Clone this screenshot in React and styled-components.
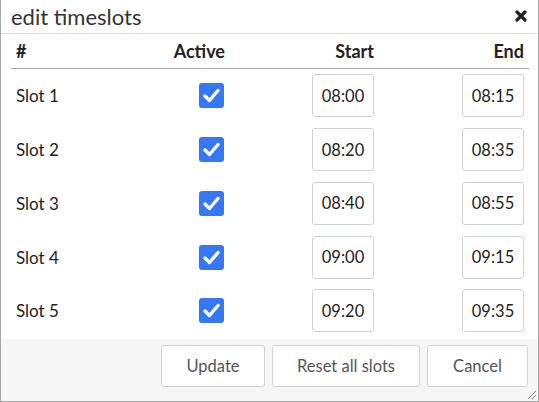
import React from 'react';
import styled, { createGlobalStyle } from 'styled-components';

const GlobalStyle = createGlobalStyle`
  html, body {
    margin: 0;
    padding: 0;
    background: #fff;
  }
  * {
    box-sizing: border-box;
  }
`;

const Dialog = styled.div`
  position: relative;
  width: 539px;
  height: 402px;
  display: flex;
  flex-direction: column;
  border: 1px solid #a8a8a8;
  border-top: none;
  font-family: 'Lato', 'Liberation Sans', sans-serif;
  color: #222;
  background: #fff;
`;

const TitleBar = styled.div`
  height: 34px;
  display: flex;
  align-items: center;
  justify-content: space-between;
  padding: 0 11px 1px 10px;
  border-bottom: 1px solid #dedede;
`;

const Title = styled.h1`
  margin: 0;
  font-size: 22px;
  font-weight: normal;
  color: #333;
`;

const Close = styled.button`
  border: none;
  background: none;
  padding: 0;
  width: 12px;
  height: 12px;
  display: flex;
  cursor: pointer;
`;

const Table = styled.div`
  flex: 1;
  padding: 0 9px 0 10px;
`;

const Row = styled.div`
  display: grid;
  grid-template-columns: 70px 150px 149px 150px;
  align-items: center;
  height: ${({ $head }) => ($head ? '35px' : '53.75px')};
  border-bottom: ${({ $head }) => ($head ? '1px solid #a8a8a8' : 'none')};
  font-weight: ${({ $head }) => ($head ? 'bold' : 'normal')};
  font-size: ${({ $head }) => ($head ? '18px' : '17px')};
`;

const Cell = styled.div`
  display: flex;
  justify-content: ${({ $left }) => ($left ? 'flex-start' : 'flex-end')};
  padding: ${({ $left }) => ($left ? '0 0 0 5px' : '0 6px 0 0')};
`;

const Check = styled.span`
  width: 25px;
  height: 25px;
  margin-right: 1px;
  border-radius: 3px;
  background: #3478f6;
  display: flex;
  align-items: center;
  justify-content: center;
`;

const TimeInput = styled.input`
  width: 62px;
  height: 43px;
  border: 1px solid #cfd3d8;
  border-radius: 3px;
  text-align: center;
  font-family: 'Lato', 'Liberation Sans', sans-serif;
  font-size: 16.5px;
  color: #222;
  padding: 0;
  background: #fff;
`;

const Footer = styled.div`
  height: 62px;
  background: #f6f6f6;
  display: flex;
  justify-content: flex-end;
  align-items: flex-start;
  gap: 7px;
  padding: 6px 10px 0 0;
`;

const Button = styled.button`
  width: ${({ $w }) => $w}px;
  height: 42px;
  background: #fff;
  border: 1px solid #d3d3d3;
  border-radius: 3px;
  font-family: 'Lato', 'Liberation Sans', sans-serif;
  font-size: 16.5px;
  color: #555;
  cursor: pointer;
`;

const Grip = styled.svg`
  position: absolute;
  right: 1px;
  bottom: 1px;
`;

const slots = [
  ['Slot 1', '08:00', '08:15'],
  ['Slot 2', '08:20', '08:35'],
  ['Slot 3', '08:40', '08:55'],
  ['Slot 4', '09:00', '09:15'],
  ['Slot 5', '09:20', '09:35'],
];

const CheckMark = () => (
  <svg width="17" height="15" viewBox="0 0 17 15">
    <path d="M2 8 L6.5 12.5 L15 2.5" fill="none" stroke="#fff" strokeWidth="3.4" strokeLinecap="round" strokeLinejoin="round" />
  </svg>
);

const App = () => (
  <>
    <GlobalStyle />
    <Dialog>
      <TitleBar>
        <Title>edit timeslots</Title>
        <Close aria-label="close">
          <svg width="12" height="12" viewBox="0 0 12 12">
            <path d="M2 2 L10 10 M10 2 L2 10" stroke="#222" strokeWidth="3.2" strokeLinecap="round" />
          </svg>
        </Close>
      </TitleBar>
      <Table>
        <Row $head>
          <Cell $left>#</Cell>
          <Cell>Active</Cell>
          <Cell>Start</Cell>
          <Cell>End</Cell>
        </Row>
        {slots.map(([name, start, end]) => (
          <Row key={name}>
            <Cell $left>{name}</Cell>
            <Cell>
              <Check>
                <CheckMark />
              </Check>
            </Cell>
            <Cell>
              <TimeInput defaultValue={start} />
            </Cell>
            <Cell>
              <TimeInput defaultValue={end} />
            </Cell>
          </Row>
        ))}
      </Table>
      <Footer>
        <Button $w={104}>Update</Button>
        <Button $w={148}>Reset all slots</Button>
        <Button $w={101}>Cancel</Button>
      </Footer>
      <Grip width="12" height="12" viewBox="0 0 12 12">
        <path d="M11 3 L3 11 M11 7 L7 11" stroke="#888" strokeWidth="1" />
      </Grip>
    </Dialog>
  </>
);

export default App;
